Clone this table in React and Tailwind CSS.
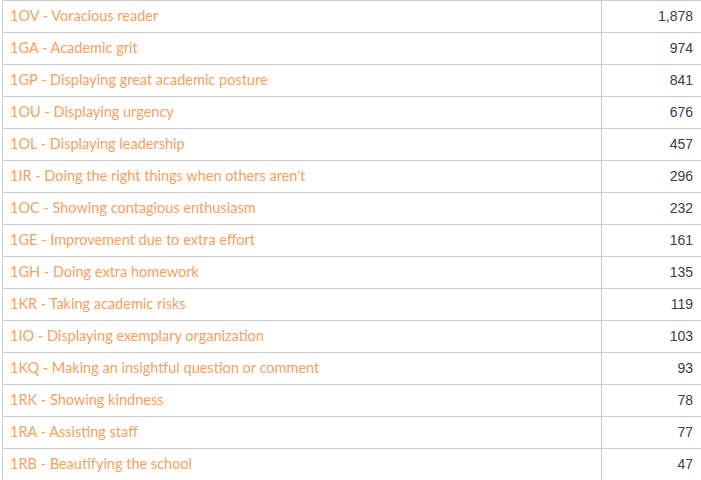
const rows = [
  ['1OV - Voracious reader', '1,878'],
  ['1GA - Academic grit', '974'],
  ['1GP - Displaying great academic posture', '841'],
  ['1OU - Displaying urgency', '676'],
  ['1OL - Displaying leadership', '457'],
  ["1IR - Doing the right things when others aren't", '296'],
  ['1OC - Showing contagious enthusiasm', '232'],
  ['1GE - Improvement due to extra effort', '161'],
  ['1GH - Doing extra homework', '135'],
  ['1KR - Taking academic risks', '119'],
  ['1IO - Displaying exemplary organization', '103'],
  ['1KQ - Making an insightful question or comment', '93'],
  ['1RK - Showing kindness', '78'],
  ['1RA - Assisting staff', '77'],
  ['1RB - Beautifying the school', '47'],
];

export default function App() {
  return (
    <div className="w-[701px] h-[480px] overflow-hidden bg-white">
      <div className="ml-[2px] w-[701px] border-t border-l border-[#cccccc]">
        {rows.map(([label, count]) => (
          <div key={label} className="flex h-[32px] border-b border-[#cccccc]">
            <div className="w-[599px] border-r border-[#cccccc] pl-[7px] pb-[1px] flex items-center text-[14.5px] text-[#f7a05c] font-['Lato',sans-serif]">
              {label}
            </div>
            <div className="flex-1 pr-[10px] pb-[1px] flex items-center justify-end text-[14px] text-[#3c3c48] font-['Liberation_Sans',Arial,sans-serif]">
              {count}
            </div>
          </div>
        ))}
      </div>
    </div>
  );
}
